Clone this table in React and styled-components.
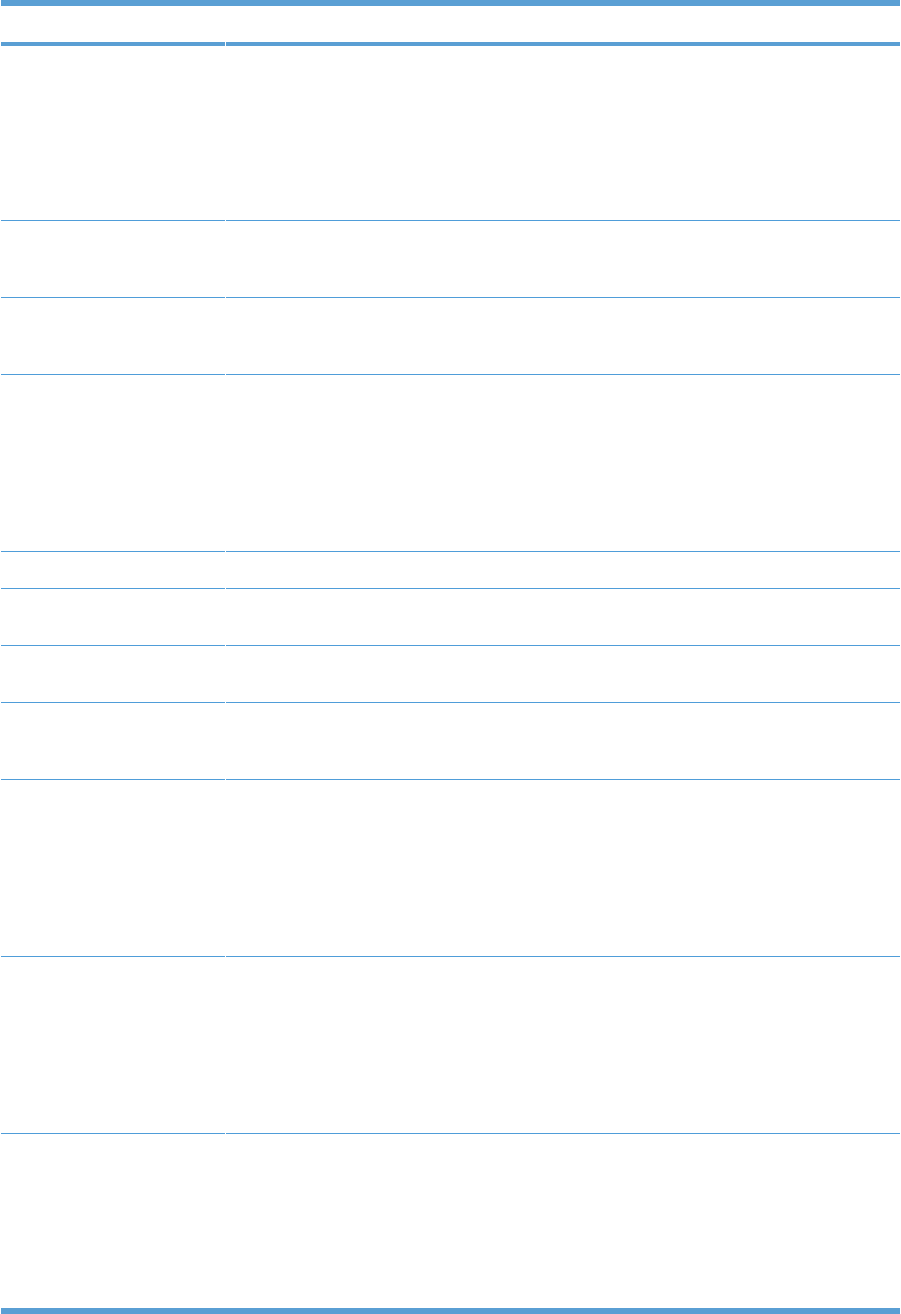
import React from "react";
import styled, { createGlobalStyle } from "styled-components";

const GlobalStyle = createGlobalStyle`
    html, body {
        margin: 0;
        padding: 0;
        background: #fff;
        font-family: "Liberation Sans", Arial, sans-serif;
    }
`

const Page = styled.div`
    width: 901px;
    padding-left: 1px;
    box-sizing: border-box;
`

const Table = styled.div`
    width: 899px;
    border-top: 6px solid #5a9fd4;
    border-bottom: 6px solid #5a9fd4;
    display: flex;
    flex-direction: column;
`

const Row = styled.div`
    display: grid;
    grid-template-columns: 224px 1fr;
    column-gap: 1px;
    height: ${(p) => p.$h}px;
`

const Cell = styled.div`
    box-sizing: border-box;
    border-bottom: ${(p) => (p.$head ? "4px solid #5a9fd4" : p.$last ? "none" : "1px solid #4f9dd9")};
    font-size: 13px;
    color: #231f20;
    padding: 6px 8px;
`

// row heights include the 1px rule underneath
const rows = [175, 77, 77, 177, 37, 57, 57, 77, 177, 177, 174];

export default () => {
    return (
        <Page>
            <GlobalStyle />
            <Table>
                <Row $h={40}>
                    <Cell $head />
                    <Cell $head />
                </Row>
                {rows.map((h, i) => (
                    <Row key={i} $h={h}>
                        <Cell $last={i === rows.length - 1} />
                        <Cell $last={i === rows.length - 1} />
                    </Row>
                ))}
            </Table>
        </Page>
    )
}
